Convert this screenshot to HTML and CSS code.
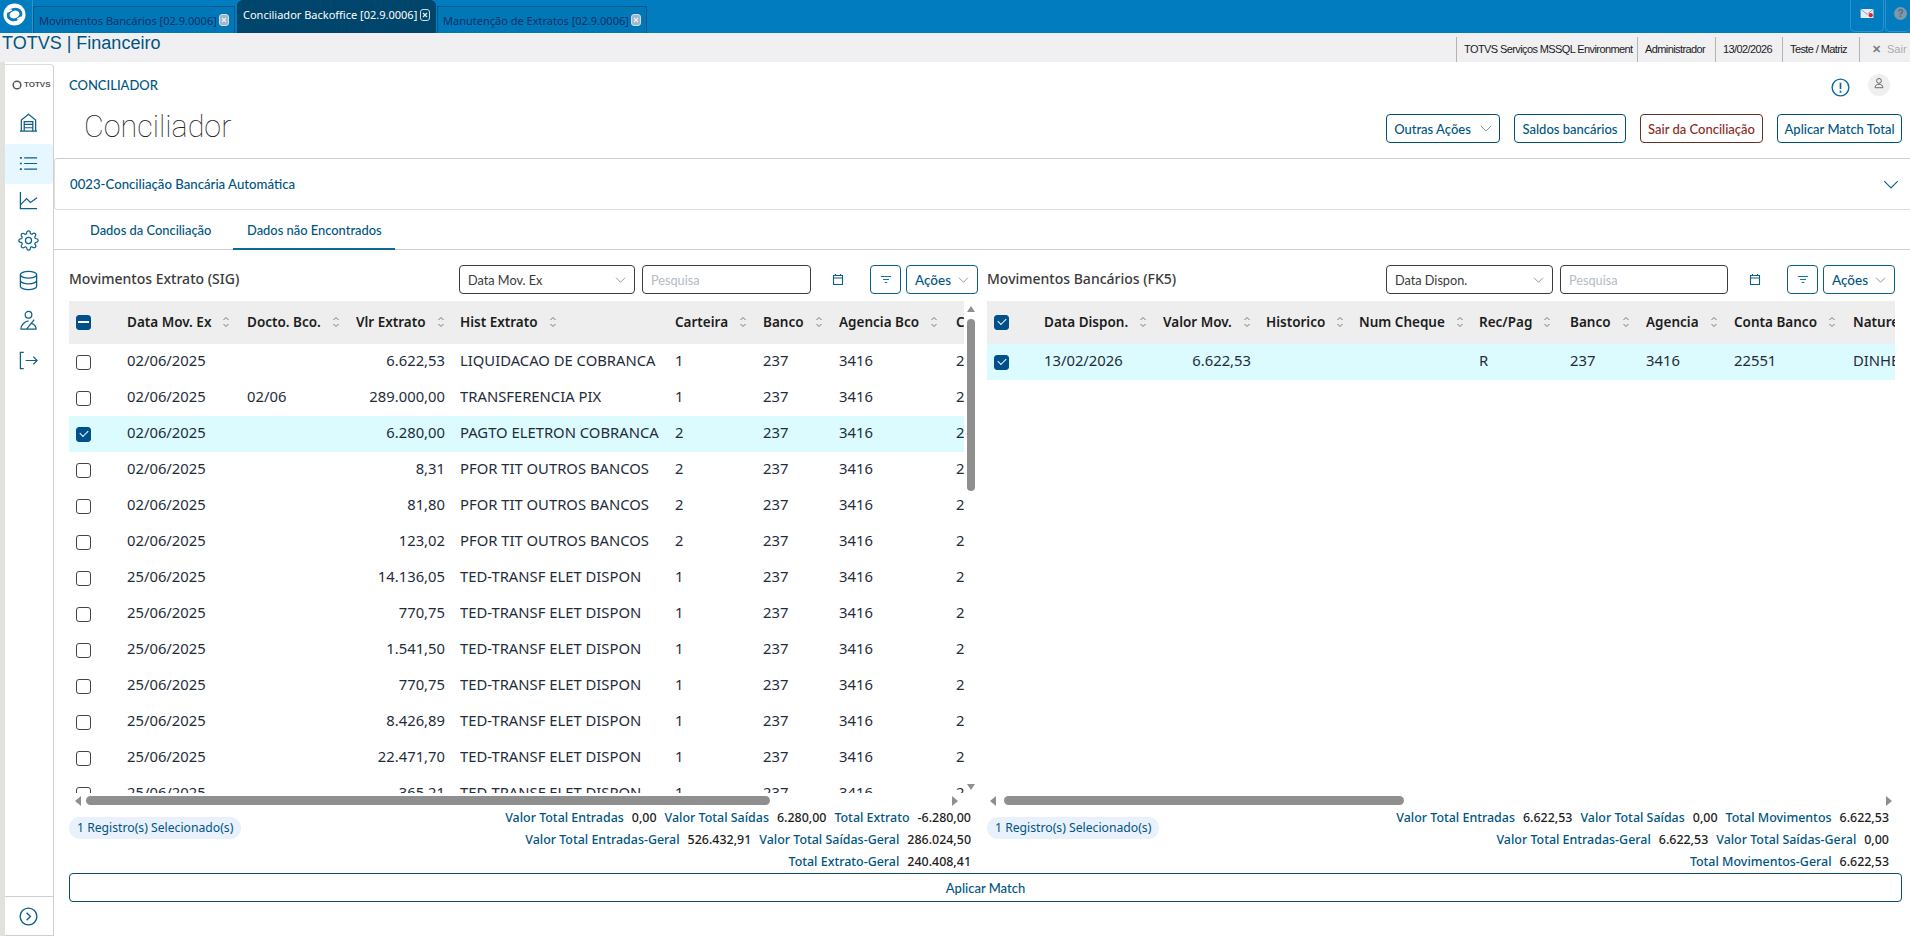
FILE: index.html
```html
<!DOCTYPE html>
<html lang="pt-BR">
<head>
<meta charset="utf-8">
<title>TOTVS | Financeiro</title>
<link rel="stylesheet" href="styles.css">
</head>
<body>
<svg class="defs" width="0" height="0">
  <symbol id="sort" viewBox="0 0 8 12"><path d="M1.500 4 4 1.500 6.500 4M1.500 8 4 10.500 6.500 8" fill="none" stroke="#5d7f93" stroke-width="1"/></symbol>
  <symbol id="chev" viewBox="0 0 14 8"><path d="M1 1l6 6 6-6" fill="none" stroke="currentColor" stroke-width="1"/></symbol>
  <symbol id="cal" viewBox="0 0 12 13"><path d="M1.500 2.500h9v9h-9zM1.500 5h9M3.500 1v2M8.500 1v2" fill="none" stroke="#0b5f8a" stroke-width="1.100"/></symbol>
  <symbol id="filt" viewBox="0 0 14 10"><path d="M1 1.500h12M3.500 5h7M5.500 8.500h3" fill="none" stroke="#0b6a9a" stroke-width="1.100"/></symbol>
  <symbol id="close" viewBox="0 0 10 12"><rect x=".5" y=".5" width="9" height="11" rx="2.500" fill="currentColor" stroke="#cfdde6"/><path d="M3 4l4 4M7 4l-4 4" stroke="#e8eff4" stroke-width="1.200"/></symbol>
</svg>

<header class="topbar">
  <div class="logo-box">
    <svg class="logo" viewBox="0 0 24 24"><circle cx="12" cy="12" r="11.500" fill="#fff"/><ellipse cx="12" cy="12" rx="6.800" ry="5.400" transform="rotate(-18 12 12)" fill="none" stroke="#0a7cbd" stroke-width="3"/><path d="M4.500 9.500 9 7M19.500 14.500 15 17" stroke="#fff" stroke-width="1.800"/></svg>
  </div>
  <div class="tab tab-1"><span>Movimentos Bancários [02.9.0006]</span><svg class="tab-x"><use href="#close"/></svg></div>
  <div class="tab tab-active"><span>Conciliador Backoffice [02.9.0006]</span><svg class="tab-x"><use href="#close"/></svg></div>
  <div class="tab tab-3"><span>Manutenção de Extratos [02.9.0006]</span><svg class="tab-x"><use href="#close"/></svg></div>
  <div class="top-actions">
    <div class="top-btn top-mail">
      <svg viewBox="0 0 16 12" class="mail"><rect x=".5" y="1" width="14" height="10" rx="1" fill="#e6eef4"/><path d="M.5 1 7.500 7l7-6" fill="none" stroke="#7f9db1"/><circle cx="11.500" cy="7.800" r="2.300" fill="#e5202e"/></svg>
    </div>
    <div class="top-btn top-help"><span class="help">?</span></div>
  </div>
</header>

<div class="appbar">
  <div class="app-title">TOTVS | Financeiro</div>
  <div class="app-info">
    <span class="info i-env">TOTVS Serviços MSSQL Environment</span>
    <span class="info i-adm">Administrador</span>
    <span class="info i-dat">13/02/2026</span>
    <span class="info i-fil">Teste / Matriz</span>
    <span class="info i-sair"><b class="x">✕</b>Sair</span>
  </div>
</div>

<div class="shell">
  <div class="strip"></div>
  <nav class="side">
    <div class="side-logo">
      <svg viewBox="0 0 12 12" class="side-logo-mark"><circle cx="6" cy="6" r="4.600" fill="none" stroke="#555" stroke-width="1.800"/><path d="M3 3 9 9" stroke="#fff" stroke-width="1"/></svg>
      <span>TOTVS</span>
    </div>
    <div class="side-item">
      <svg viewBox="0 0 22 22"><path d="M2 20h18M3.500 20V8.500L11 2.500l7.500 6V20" fill="none" stroke="#0b5f8a" stroke-width="1.300"/><path d="M6.500 20V10h9v10M6.500 13h9M6.500 16.500h9" fill="none" stroke="#0b5f8a" stroke-width="1.300"/></svg>
    </div>
    <div class="side-item side-active">
      <svg viewBox="0 0 22 22"><path d="M6.500 5H20M6.500 11H20M6.500 17H20" stroke="#0b5f8a" stroke-width="1.300"/><path d="M2 5h2M2 11h2M2 17h2" stroke="#0b5f8a" stroke-width="1.800"/></svg>
    </div>
    <div class="side-item">
      <svg viewBox="0 0 22 22"><path d="M2.500 2v17.500H20" fill="none" stroke="#0b5f8a" stroke-width="1.300"/><path d="M3 15l6-6 4 4 7-5" fill="none" stroke="#0b5f8a" stroke-width="1.300"/></svg>
    </div>
    <div class="side-item">
      <svg viewBox="0 0 24 24"><circle cx="12" cy="12" r="3.500" fill="none" stroke="#0b5f8a" stroke-width="1.400"/><path fill="none" stroke="#0b5f8a" stroke-width="1.400" d="M19.400 15a1.650 1.650 0 0 0 .33 1.820l.06.06a2 2 0 0 1 0 2.830 2 2 0 0 1-2.830 0l-.06-.06a1.650 1.650 0 0 0-1.820-.33 1.650 1.650 0 0 0-1 1.510V21a2 2 0 0 1-2 2 2 2 0 0 1-2-2v-.09A1.650 1.650 0 0 0 9 19.400a1.650 1.650 0 0 0-1.820.33l-.06.06a2 2 0 0 1-2.830 0 2 2 0 0 1 0-2.830l.06-.06a1.650 1.650 0 0 0 .33-1.820 1.650 1.650 0 0 0-1.510-1H3a2 2 0 0 1-2-2 2 2 0 0 1 2-2h.09A1.650 1.650 0 0 0 4.600 9a1.650 1.650 0 0 0-.33-1.820l-.06-.06a2 2 0 0 1 0-2.830 2 2 0 0 1 2.830 0l.06.06a1.650 1.650 0 0 0 1.820.33H9a1.650 1.650 0 0 0 1-1.510V3a2 2 0 0 1 2-2 2 2 0 0 1 2 2v.09a1.650 1.650 0 0 0 1 1.510 1.650 1.650 0 0 0 1.820-.33l.06-.06a2 2 0 0 1 2.830 0 2 2 0 0 1 0 2.830l-.06.06a1.650 1.650 0 0 0-.33 1.820V9a1.650 1.650 0 0 0 1.510 1H21a2 2 0 0 1 2 2 2 2 0 0 1-2 2h-.09a1.650 1.650 0 0 0-1.510 1z"/></svg>
    </div>
    <div class="side-item">
      <svg viewBox="0 0 22 22"><ellipse cx="11" cy="5" rx="8.500" ry="3.500" fill="none" stroke="#0b5f8a" stroke-width="1.400"/><path d="M2.500 5v12c0 2 3.800 3.500 8.500 3.500s8.500-1.500 8.500-3.500V5M2.500 11c0 2 3.800 3.500 8.500 3.500s8.500-1.500 8.500-3.500" fill="none" stroke="#0b5f8a" stroke-width="1.400"/></svg>
    </div>
    <div class="side-item">
      <svg viewBox="0 0 22 22"><circle cx="11" cy="5" r="3.500" fill="none" stroke="#0b5f8a" stroke-width="1.300"/><path d="M2.500 20h17M3 20c0-4 4-8 8-8.500M9 20l8-10M14 14c3 1 5 3 5 6" fill="none" stroke="#0b5f8a" stroke-width="1.300"/></svg>
    </div>
    <div class="side-item">
      <svg viewBox="0 0 22 22"><path d="M6 2.500H2.500v17H6M8 11h12M16 7l4 4-4 4" fill="none" stroke="#0b5f8a" stroke-width="1.300"/></svg>
    </div>
    <div class="side-foot">
      <svg viewBox="0 0 20 20"><circle cx="10" cy="10" r="8.800" fill="none" stroke="#0b5f8a" stroke-width="1.400"/><path d="M8 6l4 4-4 4" fill="none" stroke="#0b5f8a" stroke-width="1.400"/></svg>
    </div>
  </nav>

  <main class="content">
    <div class="crumb-row">
      <span class="crumb">CONCILIADOR</span>
      <div class="crumb-icons">
        <svg class="alert" viewBox="0 0 20 20"><circle cx="10" cy="10" r="8.800" fill="none" stroke="#0b6a9a" stroke-width="1.500"/><path d="M10 5v6.500M10 13.500v2" stroke="#0b6a9a" stroke-width="1.800"/></svg>
        <span class="avatar"><svg viewBox="0 0 14 14"><circle cx="7" cy="4.500" r="2.800" fill="none" stroke="#555" stroke-width="1"/><path d="M2.500 12.500c0-3 2-4 4.500-4s4.500 1 4.500 4z" fill="none" stroke="#555" stroke-width="1"/></svg></span>
      </div>
    </div>

    <div class="head-row">
      <h1 class="title">Conciliador</h1>
      <div class="head-actions">
        <button class="btn btn-outras">Outras Ações<svg class="chev"><use href="#chev"/></svg></button>
        <button class="btn btn-saldos">Saldos bancários</button>
        <button class="btn btn-danger">Sair da Conciliação</button>
        <button class="btn btn-match">Aplicar Match Total</button>
      </div>
    </div>

    <section class="accordion">
      <span>0023-Conciliação Bancária Automática</span>
      <svg class="acc-chev"><use href="#chev"/></svg>
    </section>

    <div class="tabs">
      <div class="pane-tab tab-a">Dados da Conciliação</div>
      <div class="pane-tab tab-b">Dados não Encontrados</div>
    </div>

    <div class="panes">
      <section class="pane pane-left">
        <div class="toolbar">
          <h2 class="pane-title">Movimentos Extrato (SIG)</h2>
          <div class="sel sel-l"><span>Data Mov. Ex</span><svg class="chev-s"><use href="#chev"/></svg></div>
          <div class="inp inp-l">Pesquisa</div>
          <svg class="cal"><use href="#cal"/></svg>
          <button class="tool tool-f"><svg class="filt"><use href="#filt"/></svg></button>
          <button class="tool tool-a">Ações<svg class="chev-s"><use href="#chev"/></svg></button>
        </div>
        <div class="grid-wrap">
          <div class="grid-clip grid-clip-l">
            <table class="grid grid-l">
              <colgroup><col class="c-chk"><col class="c-data"><col class="c-doc"><col class="c-vlr"><col class="c-hist"><col class="c-cart"><col class="c-bco"><col class="c-ag"><col class="c-ct"></colgroup>
              <thead><tr>
                <th><span class="ck ck-minus"></span></th>
                <th>Data Mov. Ex<svg class="sort"><use href="#sort"/></svg></th>
                <th>Docto. Bco.<svg class="sort"><use href="#sort"/></svg></th>
                <th>Vlr Extrato<svg class="sort"><use href="#sort"/></svg></th>
                <th>Hist Extrato<svg class="sort"><use href="#sort"/></svg></th>
                <th>Carteira<svg class="sort"><use href="#sort"/></svg></th>
                <th>Banco<svg class="sort"><use href="#sort"/></svg></th>
                <th>Agencia Bco<svg class="sort"><use href="#sort"/></svg></th>
                <th>Conta</th>
              </tr></thead>
              <tbody>
                <tr><td><span class="ck"></span></td><td>02/06/2025</td><td></td><td class="num">6.622,53</td><td>LIQUIDACAO DE COBRANCA</td><td>1</td><td>237</td><td>3416</td><td>22551</td></tr>
                <tr><td><span class="ck"></span></td><td>02/06/2025</td><td>02/06</td><td class="num">289.000,00</td><td>TRANSFERENCIA PIX</td><td>1</td><td>237</td><td>3416</td><td>22551</td></tr>
                <tr class="sel-row"><td><span class="ck ck-on"></span></td><td>02/06/2025</td><td></td><td class="num">6.280,00</td><td>PAGTO ELETRON COBRANCA</td><td>2</td><td>237</td><td>3416</td><td>22551</td></tr>
                <tr><td><span class="ck"></span></td><td>02/06/2025</td><td></td><td class="num">8,31</td><td>PFOR TIT OUTROS BANCOS</td><td>2</td><td>237</td><td>3416</td><td>22551</td></tr>
                <tr><td><span class="ck"></span></td><td>02/06/2025</td><td></td><td class="num">81,80</td><td>PFOR TIT OUTROS BANCOS</td><td>2</td><td>237</td><td>3416</td><td>22551</td></tr>
                <tr><td><span class="ck"></span></td><td>02/06/2025</td><td></td><td class="num">123,02</td><td>PFOR TIT OUTROS BANCOS</td><td>2</td><td>237</td><td>3416</td><td>22551</td></tr>
                <tr><td><span class="ck"></span></td><td>25/06/2025</td><td></td><td class="num">14.136,05</td><td>TED-TRANSF ELET DISPON</td><td>1</td><td>237</td><td>3416</td><td>22551</td></tr>
                <tr><td><span class="ck"></span></td><td>25/06/2025</td><td></td><td class="num">770,75</td><td>TED-TRANSF ELET DISPON</td><td>1</td><td>237</td><td>3416</td><td>22551</td></tr>
                <tr><td><span class="ck"></span></td><td>25/06/2025</td><td></td><td class="num">1.541,50</td><td>TED-TRANSF ELET DISPON</td><td>1</td><td>237</td><td>3416</td><td>22551</td></tr>
                <tr><td><span class="ck"></span></td><td>25/06/2025</td><td></td><td class="num">770,75</td><td>TED-TRANSF ELET DISPON</td><td>1</td><td>237</td><td>3416</td><td>22551</td></tr>
                <tr><td><span class="ck"></span></td><td>25/06/2025</td><td></td><td class="num">8.426,89</td><td>TED-TRANSF ELET DISPON</td><td>1</td><td>237</td><td>3416</td><td>22551</td></tr>
                <tr><td><span class="ck"></span></td><td>25/06/2025</td><td></td><td class="num">22.471,70</td><td>TED-TRANSF ELET DISPON</td><td>1</td><td>237</td><td>3416</td><td>22551</td></tr>
                <tr><td><span class="ck"></span></td><td>25/06/2025</td><td></td><td class="num">365,21</td><td>TED-TRANSF ELET DISPON</td><td>1</td><td>237</td><td>3416</td><td>22551</td></tr>
              </tbody>
            </table>
          </div>
          <div class="vscroll">
            <span class="arrow-up"></span>
            <span class="vthumb"></span>
            <span class="arrow-down"></span>
          </div>
        </div>
        <div class="hscroll hscroll-l"><span class="arrow-left"></span><span class="hthumb hthumb-l"></span><span class="arrow-right"></span></div>
        <div class="foot">
          <span class="pill">1 Registro(s) Selecionado(s)</span>
          <div class="totals">
            <div class="tot-row"><label>Valor Total Entradas</label><b>0,00</b><label>Valor Total Saídas</label><b>6.280,00</b><label>Total Extrato</label><b>-6.280,00</b></div>
            <div class="tot-row"><label>Valor Total Entradas-Geral</label><b>526.432,91</b><label>Valor Total Saídas-Geral</label><b>286.024,50</b></div>
            <div class="tot-row"><label>Total Extrato-Geral</label><b>240.408,41</b></div>
          </div>
        </div>
      </section>

      <section class="pane pane-right">
        <div class="toolbar">
          <h2 class="pane-title">Movimentos Bancários (FK5)</h2>
          <div class="sel sel-r"><span>Data Dispon.</span><svg class="chev-s"><use href="#chev"/></svg></div>
          <div class="inp inp-r">Pesquisa</div>
          <svg class="cal"><use href="#cal"/></svg>
          <button class="tool tool-f"><svg class="filt"><use href="#filt"/></svg></button>
          <button class="tool tool-a">Ações<svg class="chev-s"><use href="#chev"/></svg></button>
        </div>
        <div class="grid-wrap">
          <div class="grid-clip">
            <table class="grid grid-r">
              <colgroup><col class="r-chk"><col class="r-data"><col class="r-vlr"><col class="r-hist"><col class="r-chq"><col class="r-rec"><col class="r-bco"><col class="r-ag"><col class="r-ct"><col class="r-nat"></colgroup>
              <thead><tr>
                <th><span class="ck ck-on"></span></th>
                <th>Data Dispon.<svg class="sort"><use href="#sort"/></svg></th>
                <th>Valor Mov.<svg class="sort"><use href="#sort"/></svg></th>
                <th>Historico<svg class="sort"><use href="#sort"/></svg></th>
                <th>Num Cheque<svg class="sort"><use href="#sort"/></svg></th>
                <th>Rec/Pag<svg class="sort"><use href="#sort"/></svg></th>
                <th>Banco<svg class="sort"><use href="#sort"/></svg></th>
                <th>Agencia<svg class="sort"><use href="#sort"/></svg></th>
                <th>Conta Banco<svg class="sort"><use href="#sort"/></svg></th>
                <th>Natureza</th>
              </tr></thead>
              <tbody>
                <tr class="sel-row"><td><span class="ck ck-on"></span></td><td>13/02/2026</td><td class="num">6.622,53</td><td></td><td></td><td>R</td><td>237</td><td>3416</td><td>22551</td><td>DINHEIRO</td></tr>
              </tbody>
            </table>
          </div>
        </div>
        <div class="hscroll hscroll-r"><span class="arrow-left"></span><span class="hthumb hthumb-r"></span><span class="arrow-right"></span></div>
        <div class="foot">
          <span class="pill">1 Registro(s) Selecionado(s)</span>
          <div class="totals">
            <div class="tot-row"><label>Valor Total Entradas</label><b>6.622,53</b><label>Valor Total Saídas</label><b>0,00</b><label>Total Movimentos</label><b>6.622,53</b></div>
            <div class="tot-row"><label>Valor Total Entradas-Geral</label><b>6.622,53</b><label>Valor Total Saídas-Geral</label><b>0,00</b></div>
            <div class="tot-row"><label>Total Movimentos-Geral</label><b>6.622,53</b></div>
          </div>
        </div>
      </section>
    </div>

    <button class="btn-wide">Aplicar Match</button>
  </main>
</div>
</body>
</html>
```

FILE: styles.css
```css
* { box-sizing: border-box; }
html, body { margin: 0; height: 936px; overflow: hidden; background: #fff; }
body { font-family: "Noto Sans", "Liberation Sans", sans-serif; font-size: 14px; color: #1c1c1c; }
.defs { position: absolute; }
button { font-family: inherit; background: #fff; cursor: pointer; }

/* top bar */
.topbar { height: 33px; background: #007cbf; display: flex; align-items: flex-start; position: relative; }
.logo-box { width: 33px; height: 33px; display: flex; align-items: center; justify-content: center; border-right: 1px solid #2a93d0; padding-right: 3px; }
.logo { width: 23px; height: 23px; margin-top: -5px; }
.tab { height: 27px; margin-top: 6px; display: flex; align-items: center; justify-content: space-between; padding: 0 5px 0 5px; font-size: 11px; color: #0e2f66; background: #0078b8; border: 1px solid #00578a; border-bottom: 0; white-space: nowrap; }
.tab .tab-x { color: #9fb9cb; }
.tab-1 { width: 202px; }
.tab-active { width: 199px; height: 33px; margin-top: 0; margin-left: 2px; color: #fff; background: #00456b; border-color: #00456b; padding-bottom: 5px; border-radius: 6px 6px 0 0; }
.tab-active .tab-x { color: #00456b; }
.tab-3 { width: 210px; margin-left: 1px; }
.tab-x { width: 10px; height: 12px; flex: none; }
.top-actions { margin-left: auto; display: flex; gap: 1px; }
.top-btn { height: 32px; border: 1px solid #2a93d0; border-top: 0; border-radius: 0 0 5px 5px; display: flex; align-items: center; justify-content: center; }
.top-mail { width: 34px; }
.top-help { width: 25px; border-right: 0; justify-content: flex-start; padding-left: 8px; }
.mail { width: 15px; height: 11px; margin-top: -4px; }
.help { width: 13px; height: 13px; border-radius: 50%; background: #7f98a8; color: #4f6f85; font: 700 10px/13px "Liberation Sans", sans-serif; text-align: center; margin-top: -4px; }

/* app bar */
.appbar { height: 29px; background: #f0f0f2; display: flex; align-items: flex-start; justify-content: space-between; }
.app-title { font: 18px/20px "Liberation Sans", sans-serif; color: #00557f; padding: 0 0 0 2px; }
.app-info { display: flex; height: 25px; margin-top: 4px; font: 11px/25px "Liberation Sans", sans-serif; letter-spacing: -.6px; color: #1b1b1b; white-space: nowrap; }
.info { border-left: 1px solid #b8b4ac; padding-left: 7px; }
.i-env { width: 181px; }
.i-adm { width: 78px; }
.i-dat { width: 67px; }
.i-fil { width: 77px; }
.i-sair { width: 51px; color: #aaa; padding-left: 12px; letter-spacing: 0; }
.x { font-size: 11px; color: #7d7d7d; margin-right: 6px; }

/* shell */
.shell { display: flex; height: 874px; }
.strip { width: 5px; background: #e2e2dc; }
.side { width: 49px; margin-top: 2px; border: 1px solid #d0d0d0; border-left: 0; border-top-color: #ddd; border-radius: 0 4px 0 0; display: flex; flex-direction: column; background: #fff; }
.side-logo { height: 37px; padding: 2px 0 0 7px; display: flex; align-items: center; gap: 2px; font: 700 8px/1 "Liberation Sans", sans-serif; color: #555; }
.side-logo-mark { width: 10px; height: 10px; flex: none; }
.side-item { height: 40px; flex: none; display: flex; align-items: center; justify-content: center; padding-right: 1px; }
.side-item svg { width: 21px; height: 21px; }
.side-active { margin-top: 2px; background: #e6f7ff; border-radius: 3px; padding-bottom: 2px; }
.side-active + .side-item { margin-top: -4px; }
.side-foot { margin-top: auto; height: 39px; border-top: 1px solid #d0d0d0; display: flex; align-items: center; justify-content: center; padding-right: 1px; }
.side-foot svg { width: 19px; height: 19px; }

.content { flex: 1; min-width: 0; padding: 0 8px 0 15px; position: relative; }
.crumb-row { height: 44px; display: flex; align-items: center; justify-content: space-between; padding-top: 2px; }
.crumb { font: 500 13px "Lato", sans-serif; color: #00557f; }
.crumb-icons { display: flex; align-items: center; gap: 18px; padding-right: 12px; }
.alert { width: 19px; height: 19px; margin-top: 4px; }
.avatar { width: 22px; height: 22px; border-radius: 50%; background: #efefef; display: flex; align-items: center; justify-content: center; }
.avatar svg { width: 12px; height: 12px; margin-top: -4px; }

.head-row { height: 52px; display: flex; justify-content: space-between; align-items: flex-start; }
.title { margin: 0 0 0 15px; font-size: 30.500px; line-height: 42px; font-weight: 100; color: #222; font-family: "Roboto", "Lato", sans-serif; }
.head-actions { display: flex; gap: 14px; margin-top: 8px; }
.btn { height: 29px; border: 1px solid #00517a; border-radius: 4px; color: #00557f; font: 500 13px "Lato", sans-serif; padding: 0; display: flex; align-items: center; justify-content: center; white-space: nowrap; }
.btn-outras { width: 114px; gap: 9px; }
.btn-saldos { width: 112px; }
.btn-danger { width: 123px; color: #8a2a1b; border-color: #6b2f22; }
.btn-match { width: 125px; }
.chev { width: 12px; height: 7px; color: #5d7f93; }

.accordion { height: 52px; margin: 0 -8px 0 -15px; padding: 0 11px 0 15px; border-top: 1px solid #ccc; border-bottom: 1px solid #ddd; border-left: 1px solid #ddd; border-radius: 4px 0 0 4px; display: flex; align-items: center; justify-content: space-between; font: 500 13.200px "Lato", sans-serif; color: #00557f; }
.acc-chev { width: 16px; height: 9px; color: #0b5f8a; }

.tabs { height: 40px; margin: 0 -8px 0 -15px; border-bottom: 1px solid #ccc; display: flex; padding-left: 21px; }
.pane-tab { height: 40px; padding-top: 12px; color: #00557f; font: 500 12.900px "Lato", sans-serif; white-space: nowrap; }
.tab-a { width: 158px; padding-left: 15px; }
.tab-b { width: 162px; padding-left: 14px; border-bottom: 2px solid #0b6a9a; }

/* panes */
.panes { display: flex; gap: 9px; height: 623px; padding-top: 15px; }
.pane { display: flex; flex-direction: column; min-width: 0; }
.pane-left { width: 909px; }
.pane-right { width: 908px; }
.toolbar { height: 29px; display: flex; align-items: center; margin-bottom: 7px; }
.pane-title { margin: 0 0 2px; font-size: 14px; font-weight: 500; color: #3a3a3a; flex: 1; white-space: nowrap; }
.sel, .inp { height: 29px; border: 1px solid #3d3d3d; border-radius: 4px; display: flex; align-items: center; padding: 0 8px; font: 12.700px "Lato", sans-serif; }
.sel { justify-content: space-between; color: #3a3a3a; padding-right: 8px; }
.sel-l { width: 176px; }
.sel-r { width: 167px; }
.inp { color: #b3bcc2; margin-left: 7px; }
.inp-l { width: 169px; }
.inp-r { width: 168px; }
.chev-s { width: 11px; height: 6px; color: #5d7f93; flex: none; }
.cal { width: 12px; height: 13px; margin: 0 26px 0 21px; flex: none; }
.tool { height: 29px; border: 1px solid #0b5f8a; border-radius: 4px; padding: 0; display: flex; align-items: center; justify-content: center; color: #00557f; flex: none; }
.tool-f { width: 31px; }
.tool-a { width: 72px; margin-left: 5px; font: 500 13.500px "Lato", sans-serif; gap: 7px; }
.filt { width: 12px; height: 9px; }

.grid-wrap { height: 492px; display: flex; }
.grid-clip { flex: 1; min-width: 0; overflow: hidden; }
.grid-clip-l { flex: none; width: 895px; }
.grid { border-collapse: collapse; table-layout: fixed; }
.grid-l { width: 995px; }
.grid-r { width: 1000px; }
.grid th { height: 43px; background: #eee; text-align: left; font-weight: 600; font-size: 13.500px; color: #1c1c1c; padding: 0 0 2px; white-space: nowrap; overflow: hidden; }
.grid td { height: 36px; padding: 0 0 4px; font-size: 14.800px; color: #1f2d3a; white-space: nowrap; overflow: hidden; }
.grid td.num { text-align: right; padding-right: 15px; }
.sel-row td { background: #dcfbff; }
.sort { width: 8px; height: 12px; margin-left: 11px; vertical-align: -1px; }
.grid th:first-child, .grid td:first-child { padding: 0 0 0 7px; }

.c-chk { width: 58px; } .c-data { width: 120px; } .c-doc { width: 109px; } .c-vlr { width: 104px; }
.c-hist { width: 215px; } .c-cart { width: 88px; } .c-bco { width: 76px; } .c-ag { width: 117px; } .c-ct { width: 108px; }
.r-chk { width: 57px; } .r-data { width: 119px; } .r-vlr { width: 103px; } .r-hist { width: 93px; } .r-chq { width: 120px; }
.r-rec { width: 91px; } .r-bco { width: 76px; } .r-ag { width: 88px; } .r-ct { width: 119px; } .r-nat { width: 134px; }

.ck { display: block; width: 15px; height: 15px; border: 1px solid #444; border-radius: 3px; background: #fff; position: relative; }
.ck-on, .ck-minus { background: #00518a; border-color: #00518a; }
.ck-on::after { content: ""; position: absolute; left: 3px; top: 2px; width: 7px; height: 4px; border-left: 1.500px solid #fff; border-bottom: 1.500px solid #fff; transform: rotate(-45deg); }
.ck-minus::after { content: ""; position: absolute; left: 1px; right: 1px; top: 5px; height: 2px; background: #fff; }

.vscroll { width: 14px; position: relative; display: flex; flex-direction: column; align-items: center; padding-top: 5px; }
.vthumb { width: 8px; height: 172px; background: #8f8f8f; border-radius: 4px; margin-top: 7px; }
.arrow-up { width: 0; height: 0; border: 4px solid transparent; border-top: 0; border-bottom: 6px solid #8f8f8f; }
.arrow-down { width: 0; height: 0; border: 4px solid transparent; border-bottom: 0; border-top: 6px solid #8f8f8f; margin-top: auto; margin-bottom: 3px; }

.hscroll { height: 9px; margin-top: 3px; display: flex; align-items: center; }
.hthumb { height: 9px; background: #8f8f8f; border-radius: 5px; margin-left: 5px; }
.arrow-left { width: 0; height: 0; margin-left: 6px; border: 5px solid transparent; border-left: 0; border-right: 6px solid #8f8f8f; }
.arrow-right { width: 0; height: 0; margin-left: auto; border: 5px solid transparent; border-right: 0; border-left: 6px solid #8f8f8f; }
.hthumb-l { width: 684px; }
.hscroll-l .arrow-right { margin-right: 20px; }
.hthumb-r { width: 400px; margin-left: 8px; }
.hscroll-r .arrow-left { margin-left: 3px; }
.hscroll-r .arrow-right { margin-right: 3px; }

.foot { display: flex; justify-content: space-between; margin-top: 1px; }
.pill { height: 22px; margin-top: 11px; padding: 0 8px; background: #e8f1fc; border-radius: 11px; color: #00557f; font-size: 12.200px; line-height: 22px; white-space: nowrap; }
.totals { display: flex; flex-direction: column; align-items: flex-end; padding-right: 7px; }
.tot-row { height: 22px; display: flex; align-items: center; gap: 8px; font-size: 12.450px; white-space: nowrap; }
.tot-row label { color: #00557f; font-weight: 500; }
.tot-row b { font-weight: 500; color: #1c1c1c; }
.pane-right .totals { padding-right: 6px; }

.btn-wide { display: block; width: 100%; height: 29px; border: 1px solid #0f4c6b; border-radius: 4px; color: #00557f; font: 500 13px "Lato", sans-serif; padding: 0; }
```
